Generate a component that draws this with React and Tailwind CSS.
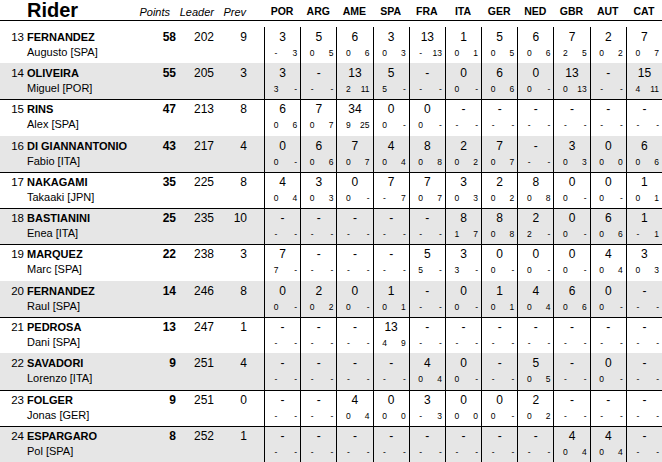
import React from 'react';

const races = ['POR', 'ARG', 'AME', 'SPA', 'FRA', 'ITA', 'GER', 'NED', 'GBR', 'AUT', 'CAT'];

const D = ['-', '-', '-'];

const riders = [
  {
    pos: 13, last: 'FERNANDEZ', first: 'Augusto [SPA]', points: 58, leader: 202, prev: 9,
    res: [['3', '-', '3'], ['5', '0', '5'], ['6', '0', '6'], ['3', '0', '3'], ['13', '-', '13'], ['1', '0', '1'], ['5', '0', '5'], ['6', '0', '6'], ['7', '2', '5'], ['2', '0', '2'], ['7', '0', '7']],
  },
  {
    pos: 14, last: 'OLIVEIRA', first: 'Miguel [POR]', points: 55, leader: 205, prev: 3,
    res: [['3', '3', '-'], D, ['13', '2', '11'], ['5', '5', '-'], D, ['0', '0', '-'], ['6', '0', '6'], ['0', '0', '-'], ['13', '0', '13'], D, ['15', '4', '11']],
  },
  {
    pos: 15, last: 'RINS', first: 'Alex [SPA]', points: 47, leader: 213, prev: 8, line: true,
    res: [['6', '0', '6'], ['7', '0', '7'], ['34', '9', '25'], ['0', '0', '-'], ['0', '0', '-'], D, D, D, D, D, D],
  },
  {
    pos: 16, last: 'DI GIANNANTONIO', first: 'Fabio [ITA]', points: 43, leader: 217, prev: 4,
    res: [['0', '0', '-'], ['6', '0', '6'], ['7', '0', '7'], ['4', '0', '4'], ['8', '0', '8'], ['2', '0', '2'], ['7', '0', '7'], D, ['3', '0', '3'], ['0', '0', '0'], ['6', '0', '6']],
  },
  {
    pos: 17, last: 'NAKAGAMI', first: 'Takaaki [JPN]', points: 35, leader: 225, prev: 8, line: true,
    res: [['4', '0', '4'], ['3', '0', '3'], ['0', '0', '-'], ['7', '-', '7'], ['7', '0', '7'], ['3', '0', '3'], ['2', '0', '2'], ['8', '0', '8'], ['0', '0', '-'], ['0', '0', '-'], ['1', '0', '1']],
  },
  {
    pos: 18, last: 'BASTIANINI', first: 'Enea [ITA]', points: 25, leader: 235, prev: 10, line: true,
    res: [D, D, D, D, D, ['8', '1', '7'], ['8', '0', '8'], ['2', '2', '-'], ['0', '0', '-'], ['6', '0', '6'], ['1', '-', '1']],
  },
  {
    pos: 19, last: 'MARQUEZ', first: 'Marc [SPA]', points: 22, leader: 238, prev: 3, line: true,
    res: [['7', '7', '-'], D, D, D, ['5', '5', '-'], ['3', '3', '-'], ['0', '0', '-'], ['0', '0', '-'], ['0', '0', '-'], ['4', '0', '4'], ['3', '0', '3']],
  },
  {
    pos: 20, last: 'FERNANDEZ', first: 'Raul [SPA]', points: 14, leader: 246, prev: 8,
    res: [['0', '0', '-'], ['2', '0', '2'], ['0', '0', '-'], ['1', '0', '1'], D, ['0', '0', '-'], ['1', '0', '1'], ['4', '0', '4'], ['6', '0', '6'], ['0', '0', '-'], D],
  },
  {
    pos: 21, last: 'PEDROSA', first: 'Dani [SPA]', points: 13, leader: 247, prev: 1, line: true,
    res: [D, D, D, ['13', '4', '9'], D, D, D, D, D, D, D],
  },
  {
    pos: 22, last: 'SAVADORI', first: 'Lorenzo [ITA]', points: 9, leader: 251, prev: 4,
    res: [D, D, D, D, ['4', '0', '4'], ['0', '0', '-'], D, ['5', '0', '5'], D, ['0', '0', '-'], D],
  },
  {
    pos: 23, last: 'FOLGER', first: 'Jonas [GER]', points: 9, leader: 251, prev: 0, line: true,
    res: [D, D, ['4', '0', '4'], ['0', '0', '0'], ['3', '-', '3'], ['0', '0', '0'], ['0', '0', '-'], ['2', '0', '2'], D, D, D],
  },
  {
    pos: 24, last: 'ESPARGARO', first: 'Pol [SPA]', points: 8, leader: 252, prev: 1, line: true,
    res: [D, D, D, D, D, D, D, D, ['4', '0', '4'], ['4', '0', '4'], D],
  },
];

export default function App() {
  return (
    <div className="w-[662px] h-[462px] overflow-hidden bg-white text-black font-['Liberation_Sans',Arial,sans-serif]">
      {/* header */}
      <div className="grid grid-cols-[264px_repeat(11,1fr)] h-[21px] border-b border-black">
        <div className="grid grid-cols-[24px_122px_30px_38px_34px_16px]">
          <div />
          <div className="pl-[3px] text-[20px] leading-[20px] font-bold">Rider</div>
          <div className="pt-[7px] text-[11px] leading-none italic text-right whitespace-nowrap -ml-[10px] mr-[6px]">Points</div>
          <div className="pt-[7px] text-[11px] leading-none italic text-right">Leader</div>
          <div className="pt-[7px] text-[11px] leading-none italic text-right mr-[2px]">Prev</div>
          <div />
        </div>
        {races.map((r) => (
          <div key={r} className="pt-[6px] text-[10.5px] leading-none font-bold text-center">{r}</div>
        ))}
      </div>
      <div className="h-[5.7px]" />

      {riders.map((r, i) => (
        <div
          key={r.pos}
          className={`grid grid-cols-[264px_repeat(11,1fr)] h-[36.3px] ${i % 2 === 1 ? 'bg-[#e6e6e6]' : 'bg-white'} ${r.line ? 'shadow-[inset_0_1px_0_#000]' : ''}`}
        >
          <div className="grid grid-cols-[24px_122px_30px_38px_34px_16px] pt-[3px] leading-[15px]">
            <div className="text-[11.5px] text-right">{r.pos}</div>
            <div className="pl-[3px] text-[11px] whitespace-nowrap">
              <div className="font-bold">{r.last}</div>
              <div>{r.first}</div>
            </div>
            <div className="text-[12px] font-bold text-right">{r.points}</div>
            <div className="text-[12px] text-right">{r.leader}</div>
            <div className="text-[12px] text-right mr-[1px]">{r.prev}</div>
            <div />
          </div>
          {r.res.map(([total, a, b], j) => (
            <div key={j} className="border-l border-black pt-[3px]">
              <div className="text-[12px] leading-[15px] text-center">{total}</div>
              <div className="mt-[3px] flex justify-between text-[8.5px] leading-[10px] pr-[3px]">
                <span className="ml-[7px] w-[8px] text-center">{a}</span>
                <span>{b}</span>
              </div>
            </div>
          ))}
        </div>
      ))}
    </div>
  );
}
